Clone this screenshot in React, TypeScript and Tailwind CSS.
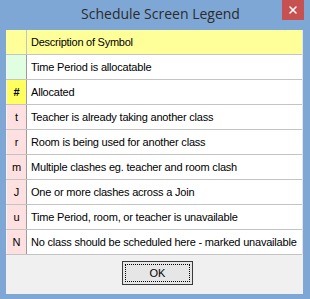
import { X } from 'lucide-react';

type Row = { sym: string; desc: string; bg: string; bold?: boolean };

const ROWS: Row[] = [
  { sym: '', desc: 'Time Period is allocatable', bg: 'bg-[#e0ffe0]' },
  { sym: '#', desc: 'Allocated', bg: 'bg-[#ffff60]', bold: true },
  { sym: 't', desc: 'Teacher is already taking another class', bg: 'bg-[#ffe0e0]' },
  { sym: 'r', desc: 'Room is being used for another class', bg: 'bg-[#ffe0e0]' },
  { sym: 'm', desc: 'Multiple clashes eg. teacher and room clash', bg: 'bg-[#ffe0e0]' },
  { sym: 'J', desc: 'One or more clashes across a Join', bg: 'bg-[#ffe0e0]' },
  { sym: 'u', desc: 'Time Period, room, or teacher is unavailable', bg: 'bg-[#ffe0e0]' },
  { sym: 'N', desc: 'No class should be scheduled here - marked unavailable', bg: 'bg-[#ffe0e0]' },
];

export default function App() {
  return (
    <div className="w-[310px] h-[299px] bg-[#7fa7d6] flex flex-col overflow-hidden font-['Liberation_Sans',Arial,sans-serif]">
      {/* title bar */}
      <div className="relative h-[30px] shrink-0 flex items-center justify-center">
        <span className="text-[14px] leading-none text-[#2b2b2b] font-['Open_Sans','Noto_Sans',sans-serif] -mt-[3px] ml-[11px]">
          Schedule Screen Legend
        </span>
        <div className="absolute right-[6px] top-0 w-[22px] h-[20px] bg-[#c75050] flex items-center justify-center">
          <X size={12} strokeWidth={3} color="#ffffff" />
        </div>
      </div>

      {/* content */}
      <div className="ml-[6px] w-[297px] h-[264px] bg-[#f0f0f0] flex flex-col">
        <div className="border-r border-[#e4e4e4] bg-white">
          {/* header */}
          <div className="flex h-[25px] bg-[#ffff99] border-b border-[#c4c4c4]">
            <div className="w-[21px] shrink-0 border-r border-[#c4c4c4]" />
            <div className="flex-1 flex items-center pl-[4px] text-[11px] tracking-[-0.25px] text-black">Description of Symbol</div>
          </div>
          {ROWS.map((r) => (
            <div key={r.desc} className="flex h-[25px] border-b border-[#c4c4c4]">
              <div
                className={`w-[21px] shrink-0 ${r.bg} border-l border-l-[#f4f4f4] border-r border-r-[#9c9c9c] flex items-center justify-center text-[11px] text-black ${r.bold ? 'font-bold' : ''}`}
              >
                {r.sym}
              </div>
              <div className="flex-1 min-w-0 flex items-center pl-[4px] text-[11px] tracking-[-0.2px] text-black whitespace-nowrap overflow-hidden">
                {r.desc}
              </div>
            </div>
          ))}
        </div>

        {/* buttons */}
        <div className="flex justify-start pl-[116px] pt-[6px]">
          <div className="w-[71px] h-[24px] border border-[#3a3a3a] bg-[#e6e6e6] p-[2px]">
            <div className="w-full h-full border border-dotted border-black flex items-center justify-center text-[11px] text-black">
              OK
            </div>
          </div>
        </div>
      </div>
    </div>
  );
}
